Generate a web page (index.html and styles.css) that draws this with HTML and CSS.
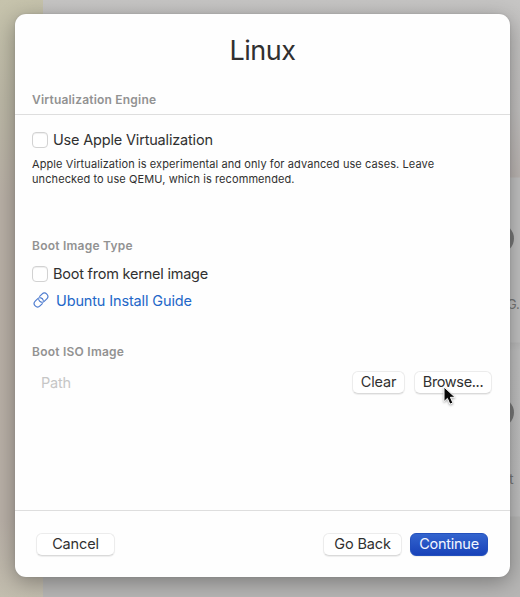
FILE: index.html
```html
<!DOCTYPE html>
<html lang="en">
<head>
<meta charset="utf-8">
<title>Linux</title>
<link rel="stylesheet" href="styles.css">
</head>
<body>
<div class="desktop">
  <div class="behind">
    <div class="wallpaper"></div>
    <div class="window">
      <div class="tile"><span class="disc"></span><span class="caption caption-first">G.</span></div>
      <div class="tile"><span class="disc"></span><span class="caption">t</span></div>
    </div>
  </div>
  <main class="sheet">
    <h1 class="title">Linux</h1>
    <h2 class="heading heading-engine">Virtualization Engine</h2>
    <section class="content">
      <label class="check"><span class="box"></span><span class="label-apple">Use Apple Virtualization</span></label>
      <p class="note">Apple Virtualization is experimental and only for advanced use cases. Leave<br>unchecked to use QEMU, which is recommended.</p>
      <h2 class="heading heading-type">Boot Image Type</h2>
      <label class="check check-kernel"><span class="box"></span><span class="label-kernel">Boot from kernel image</span></label>
      <a class="guide">
        <svg class="link-icon" viewBox="0 0 16 16" aria-hidden="true"><g transform="rotate(-45 8 8)"><path d="M6.4 11.5H3.1A3.4 3.4 0 0 1 3.1 4.7h3.3A3.4 3.4 0 0 1 9.3 9.9"/><path d="M9.6 4.5h3.3A3.4 3.4 0 0 1 12.9 11.3H9.6A3.4 3.4 0 0 1 6.7 6.1"/></g></svg>
        <span>Ubuntu Install Guide</span>
      </a>
      <h2 class="heading heading-iso">Boot ISO Image</h2>
      <div class="path-row">
        <span class="path">Path</span>
        <button class="btn btn-clear">Clear</button>
        <button class="btn btn-browse">Browse...</button>
      </div>
    </section>
    <footer class="footer">
      <button class="btn btn-cancel">Cancel</button>
      <button class="btn btn-back">Go Back</button>
      <button class="btn btn-continue">Continue</button>
    </footer>
  </main>
  <svg class="cursor" viewBox="0 0 14 20" aria-hidden="true"><path d="M1 1v14.6l3.4-3.2 2.5 5.8 3-1.3-2.5-5.6h4.7z"/></svg>
</div>
</body>
</html>
```

FILE: styles.css
```css
* { box-sizing: border-box; }
body { margin: 0; font-family: Inter, "Liberation Sans", sans-serif; color: #303030; }
h1, h2, p { margin: 0; }
.desktop { position: relative; width: 520px; height: 597px; overflow: hidden; padding: 14px 10px 20px 15px; }
.behind { position: absolute; inset: 0; display: flex; overflow: hidden; }
.wallpaper { flex: 0 0 43px; background: linear-gradient(#c6c3ac 0, #bcb8a6 100px, #b9b0a6 200px, #b9b0a7 520px, #c2bdae 597px); }
.window { flex: 0 0 477px; background: linear-gradient(#c6c5c4 0, #c2c0bf 110px, #bbb5b2 177px, #c1c1c1 178px, #c1c1c1 342px, #b9b9b9 343px, #c0c0c0 351px, #bfbfbf 516px, #b6b6b5 517px, #b7b6b5 597px); padding: 224px 0 0 442px; }
.tile { height: 174px; }
.disc { display: block; width: 29px; height: 29px; border-radius: 50%; background: #777; }
.caption { display: block; width: 40px; margin: 43px 0 0 24px; font-size: 14px; line-height: 17px; color: #777; }
.caption-first { width: 13px; margin-left: 22px; font-size: 13px; letter-spacing: -.8px; }
.sheet { position: relative; display: flex; flex-direction: column; width: 495px; height: 563px; border-radius: 11px; background: #fefefe; box-shadow: 0 0 2px #7776, 0 5px 22px #0005; }
.title { height: 78px; padding-top: 19px; text-align: center; font-size: 27px; line-height: 36px; font-weight: 400; letter-spacing: -.5px; }
.heading { padding-left: 17px; font-size: 12px; line-height: 16px; font-weight: 600; color: #929292; letter-spacing: .24px; }
.heading-engine { height: 23px; border-bottom: 1px solid #dedede; letter-spacing: .2px; }
.content { display: flex; flex-direction: column; height: 395px; padding-top: 15px; }
.check { display: flex; align-items: center; gap: 5px; height: 20px; padding-left: 17px; font-size: 14.5px; line-height: 18px; letter-spacing: -.18px; }
.check span:last-child { padding-bottom: 1px; }
.box { width: 16px; height: 16px; border: 1px solid #d2d2d2; border-radius: 4px; background: #fff; box-shadow: inset 0 1px 1px #0001; }
.note { margin-top: 7px; padding-left: 17px; font-size: 11px; line-height: 15px; letter-spacing: .09px; white-space: nowrap; }
.heading-type { margin-top: 51px; }
.check-kernel { margin-top: 10px; letter-spacing: -.22px; }
.guide { display: flex; align-items: center; height: 20px; margin-top: 6px; padding-left: 18px; gap: 7px; font-size: 14.5px; letter-spacing: -.14px; color: #2267c8; }
.link-icon { width: 16px; height: 16px; overflow: visible; fill: none; stroke: #4d7bcf; stroke-width: 1.15; stroke-linecap: round; }
.heading-iso { margin-top: 34px; }
.path-row { display: flex; align-items: center; height: 24px; margin-top: 10px; padding: 0 18px 0 26px; }
.path { flex: 1; font-size: 14.5px; letter-spacing: -.2px; color: #c6c6c6; }
.btn { height: 23px; padding: 0 0 1px; border: 1px solid #ececec; border-bottom-color: #dadada; border-radius: 6px; background: #fff; box-shadow: 0 1px 1px #0001; font: 14.5px/20px Inter, "Liberation Sans", sans-serif; letter-spacing: -.15px; color: #303030; }
.btn-clear { width: 53px; margin-right: 9px; }
.btn-browse { width: 78px; letter-spacing: -.35px; }
.footer { display: flex; flex: 1; align-items: flex-start; padding: 22px 22px 0 21px; border-top: 1px solid #dedede; }
.btn-cancel { width: 79px; margin-right: auto; }
.btn-back { width: 79px; margin-right: 8px; }
.btn-continue { width: 78px; border-color: #2350bd; background: linear-gradient(#3364ce, #1842b9); color: #f4f7ff; letter-spacing: -.25px; }
.cursor { position: absolute; left: 443px; top: 386px; width: 14px; height: 20px; fill: #080808; stroke: #fff; stroke-width: 1; filter: drop-shadow(0 1px 1px #0005); }
```
